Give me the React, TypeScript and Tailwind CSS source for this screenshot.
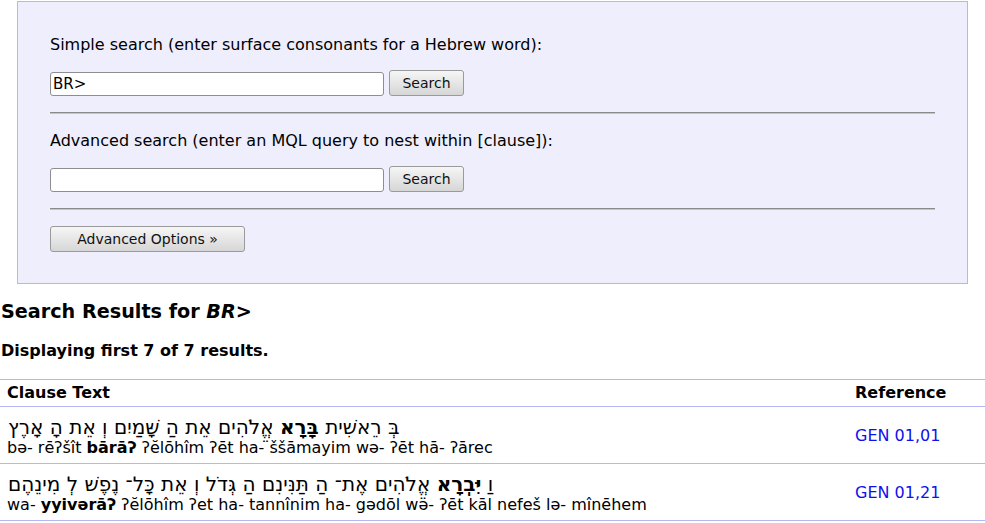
import React from "react";

const rows = [
  {
    heb: [
      { t: "בְּ רֵאשִׁית " },
      { t: "בָּרָא", b: true },
      { t: " אֱלֹהִים אֵת הַ שָּׁמַיִם וְ אֵת הָ אָרֶץ" },
    ],
    tr: [
      { t: "bə- rēʔšît " },
      { t: "bārāʔ", b: true },
      { t: " ʔĕlōhîm ʔēt ha- \u0308ššāmayim wə- ʔēt hā- ʔārec" },
    ],
    ref: "GEN 01,01",
  },
  {
    heb: [
      { t: "וַ " },
      { t: "יִּבְרָא", b: true },
      { t: " אֱלֹהִים אֶת־ הַ תַּנִּינִם הַ גְּדֹל וְ אֵת כָּל־ נֶפֶשׁ לְ מִינֵהֶם" },
    ],
    tr: [
      { t: "wa- " },
      { t: "yyivərāʔ", b: true },
      { t: " ʔĕlōhîm ʔet ha- tannînim ha- gədōl wə\u0308- ʔēt kāl nefeš lə- mînēhem" },
    ],
    ref: "GEN 01,21",
  },
];

function Rule() {
  return <div className="mt-[16px] h-[2px] border-t border-b border-t-[#8a8a8a] border-b-[#c4c4c4]" />;
}

function Button({ label, className }: { label: string; className?: string }) {
  return (
    <button
      className={`h-[26px] rounded-[3px] border border-[#9a9a9a] bg-linear-to-b from-[#f6f6f6] to-[#d6d6d6] text-[14px] leading-none text-[#111] ${className ?? ""}`}
    >
      {label}
    </button>
  );
}

function SearchRow({ value }: { value: string }) {
  return (
    <div className="mt-[16px] flex items-end gap-[5px]">
      <input
        readOnly
        value={value}
        className="h-[24px] w-[334px] rounded-[3px] border border-[#8e8e8e] bg-white px-[2px] text-[15px] text-black outline-none"
      />
      <Button label="Search" className="w-[75px]" />
    </div>
  );
}

export default function App() {
  return (
    <div className="min-h-[523px] bg-white font-['DejaVu_Sans',sans-serif] text-[16px] text-black">
      <div className="mx-[17px] mt-px border border-[#b6b6f6] bg-[#eeeefd] px-[32px] pt-[33px] pb-[31px]">
        <p className="leading-[19px]">Simple search (enter surface consonants for a Hebrew word):</p>
        <SearchRow value="BR>" />
        <Rule />
        <p className="mt-[17px] leading-[19px]">Advanced search (enter an MQL query to nest within [clause]):</p>
        <SearchRow value="" />
        <Rule />
        <Button label="Advanced Options »" className="mt-[16px] w-[195px]" />
      </div>

      <h2 className="mt-[16px] pl-px text-[19.2px] leading-[24px] font-bold">
        Search Results for <i>BR&gt;</i>
      </h2>
      <p className="mt-[17px] pl-px leading-[19px] font-bold">Displaying first 7 of 7 results.</p>

      <table className="mt-[19px] w-full border-collapse">
        <thead>
          <tr className="border-y border-[#b6b6f6]">
            <th className="pt-[3px] pb-[4px] pl-[7px] text-left leading-[19px] font-bold">Clause Text</th>
            <th className="w-[130px] pt-[3px] pb-[4px] text-left leading-[19px] font-bold">Reference</th>
          </tr>
        </thead>
        <tbody>
          {rows.map((r) => (
            <tr key={r.ref} className="border-b border-[#b6b6f6]">
              <td className="pt-[10px] pb-[6px] pl-[7px]">
                <div className="pl-px text-[20px] leading-[21px]">
                  <span dir="rtl">
                    {r.heb.map((p, i) => (p.b ? <b key={i}>{p.t}</b> : <span key={i}>{p.t}</span>))}
                  </span>
                </div>
                <div className="leading-[19px]">
                  {r.tr.map((p, i) => (p.b ? <b key={i}>{p.t}</b> : <span key={i}>{p.t}</span>))}
                </div>
              </td>
              <td className="align-middle leading-[19px] text-[#1010ee]">{r.ref}</td>
            </tr>
          ))}
        </tbody>
      </table>
    </div>
  );
}
